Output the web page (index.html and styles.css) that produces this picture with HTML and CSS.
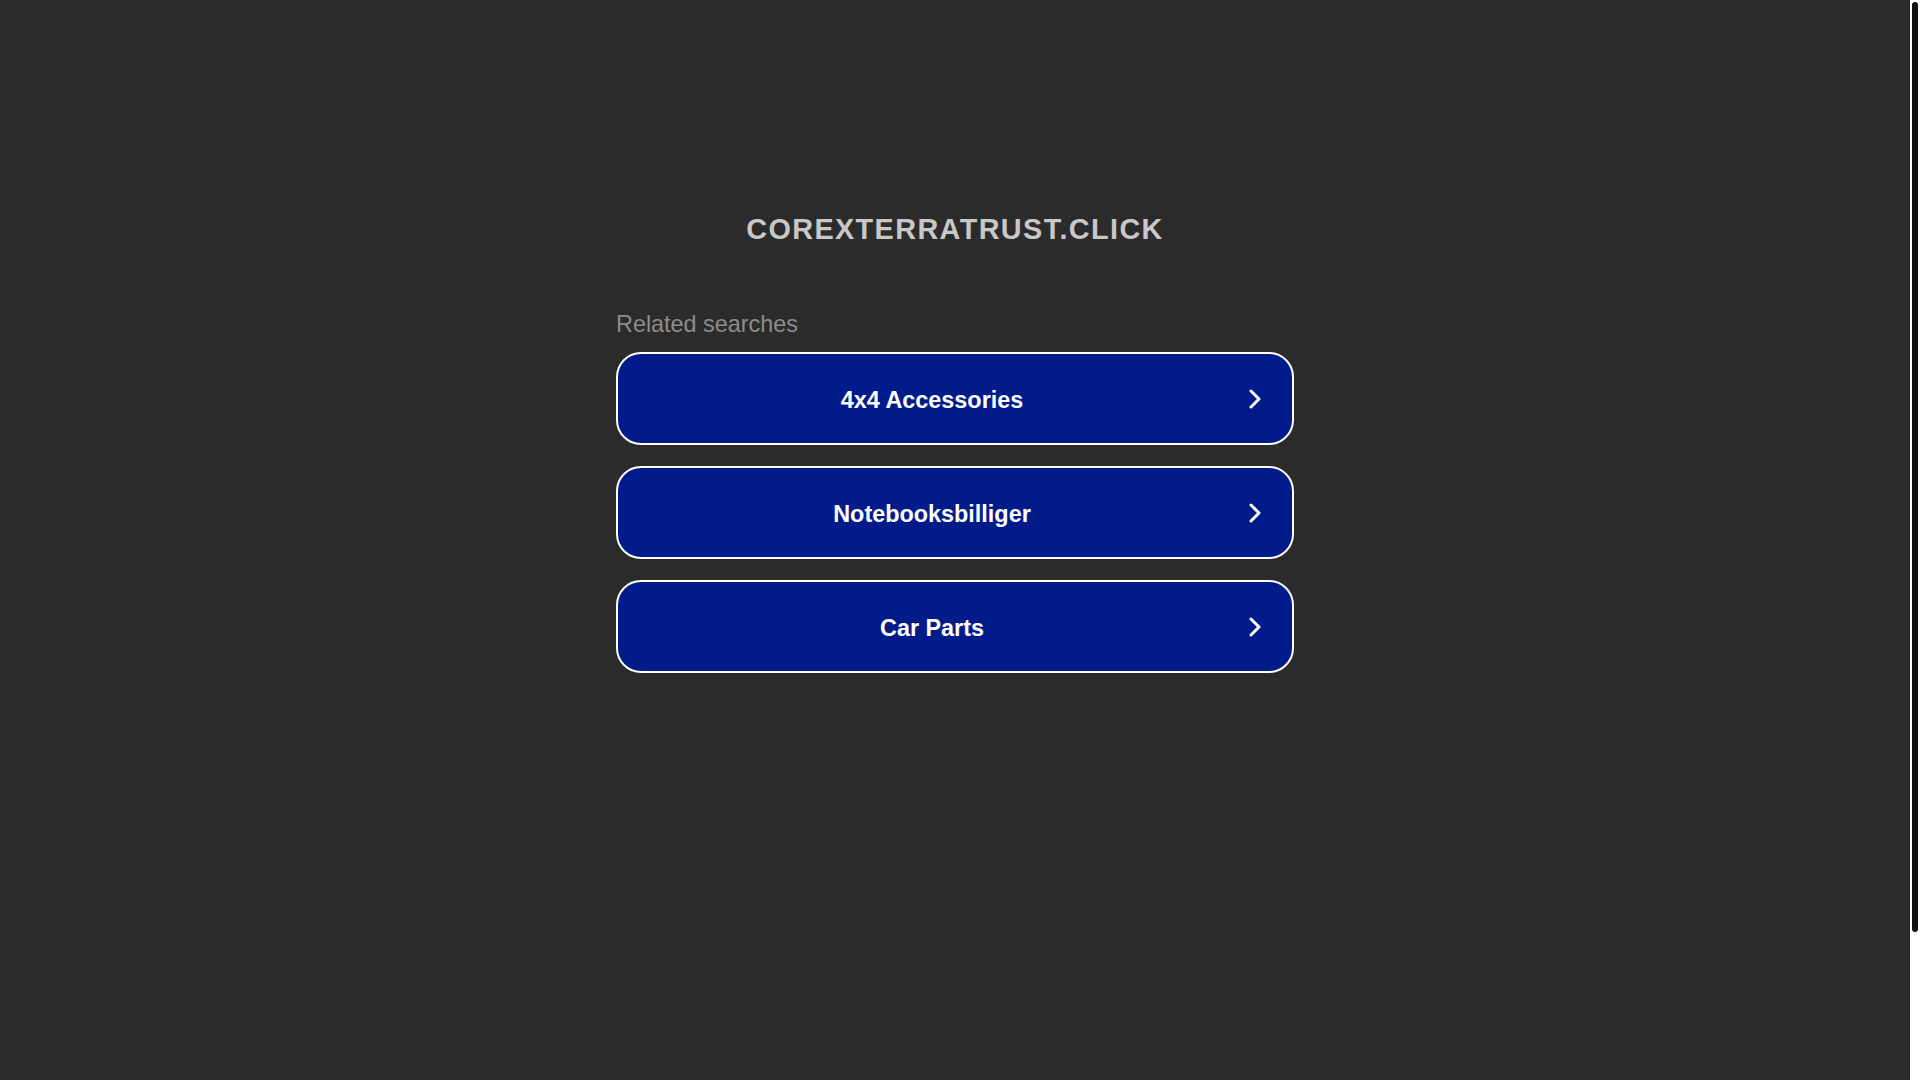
FILE: index.html
```html
<!DOCTYPE html>
<html lang="en">
<head>
<meta charset="utf-8">
<title>corexterratrust.click</title>
<link rel="stylesheet" href="styles.css">
</head>
<body>
<div class="frame">
  <div class="page">
    <h1 class="domain">COREXTERRATRUST.CLICK</h1>
    <div class="searches">
      <div class="searches-title">Related searches</div>
      <div class="links">
        <a class="link" href="#"><span class="link-label">4x4 Accessories</span><svg class="chev" width="12" height="20" viewBox="0 0 12 20"><polyline points="2,2 10,10 2,18" fill="none" stroke="#fff" stroke-width="3" stroke-linecap="round" stroke-linejoin="round"/></svg></a>
        <a class="link" href="#"><span class="link-label">Notebooksbilliger</span><svg class="chev" width="12" height="20" viewBox="0 0 12 20"><polyline points="2,2 10,10 2,18" fill="none" stroke="#fff" stroke-width="3" stroke-linecap="round" stroke-linejoin="round"/></svg></a>
        <a class="link" href="#"><span class="link-label">Car Parts</span><svg class="chev" width="12" height="20" viewBox="0 0 12 20"><polyline points="2,2 10,10 2,18" fill="none" stroke="#fff" stroke-width="3" stroke-linecap="round" stroke-linejoin="round"/></svg></a>
      </div>
    </div>
  </div>
  <div class="scrollbar"><div class="thumb"></div></div>
</div>
</body>
</html>
```

FILE: styles.css
```css
html, body {
  margin: 0;
  padding: 0;
  background: #2b2b2b;
  overflow: hidden;
}
body {
  font-family: "Liberation Sans", Arial, sans-serif;
}
.frame {
  height: 100vh;
  display: flex;
}
.page {
  flex: 1;
  box-sizing: border-box;
  padding-top: 215px;
  display: flex;
  flex-direction: column;
  align-items: center;
}
.scrollbar {
  width: 10px;
  background: #ffffff;
  box-sizing: border-box;
  padding: 2px 2px 0 2px;
}
.thumb {
  height: 930px;
  background: #111111;
  border-radius: 3px;
}
.domain {
  margin: 0;
  font-size: 28.8px;
  line-height: 1;
  font-weight: bold;
  letter-spacing: 1.4px;
  color: #c8c8c8;
}
.searches {
  width: 678px;
  margin-top: 69px;
}
.searches-title {
  font-size: 23.4px;
  line-height: 1;
  color: #8c8c8c;
}
.links {
  margin-top: 16px;
  display: flex;
  flex-direction: column;
  gap: 21px;
}
.link {
  box-sizing: border-box;
  height: 93px;
  border: 2px solid #ffffff;
  border-radius: 25px;
  background: #011b8b;
  display: flex;
  align-items: center;
  text-decoration: none;
  color: #ffffff;
}
.link-label {
  flex: 1;
  padding-top: 3px;
  text-align: center;
  font-size: 23.4px;
  font-weight: bold;
}
.chev {
  margin-left: 3px;
  margin-right: 31px;
}
```
